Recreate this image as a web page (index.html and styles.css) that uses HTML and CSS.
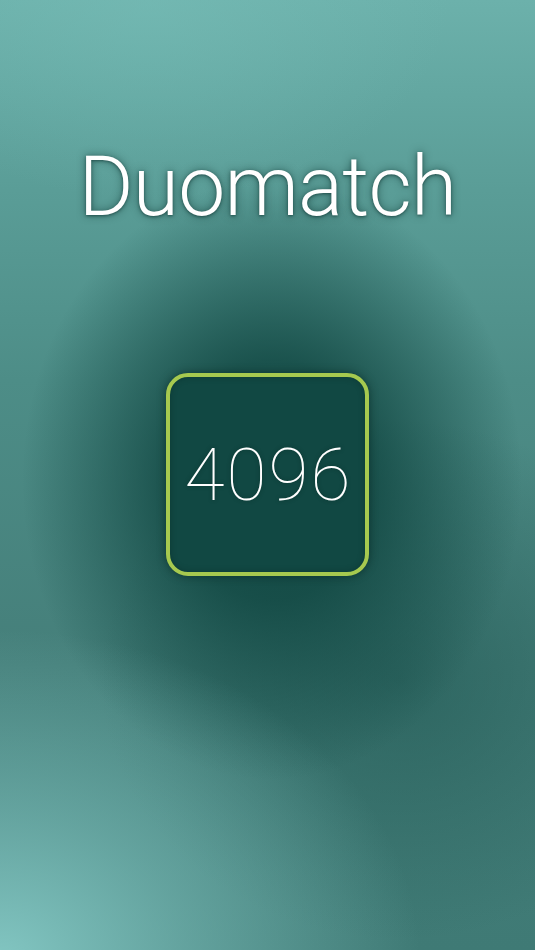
FILE: index.html
```html
<!DOCTYPE html>
<html>
<head>
<meta charset="utf-8">
<link rel="stylesheet" href="styles.css">
</head>
<body>
<main class="screen">
  <h1 class="title">Duomatch</h1>
  <div class="tile"><span class="tile-num">4096</span></div>
</main>
</body>
</html>
```
FILE: styles.css
```css
html, body {
  margin: 0;
  padding: 0;
}
body {
  width: 535px;
  height: 950px;
  overflow: hidden;
}
.screen {
  width: 535px;
  height: 950px;
  display: flex;
  flex-direction: column;
  align-items: center;
  font-family: Roboto, "Liberation Sans", sans-serif;
  background:
    radial-gradient(ellipse 250px 300px at 272px 480px, rgba(14,68,63,1) 0%, rgba(14,68,63,0.8) 40%, rgba(14,68,63,0) 100%),
    radial-gradient(ellipse 300px 260px at 400px 680px, rgba(30,85,80,0.6) 0%, rgba(30,85,80,0) 100%),
    linear-gradient(180deg, #6cb1ab 0%, #5a9d97 20%, #4d8d87 40%, #457f7a 70%, #3f7a75 100%);
  position: relative;
}
.screen::before {
  content: "";
  position: absolute;
  inset: 0;
  background:
    radial-gradient(ellipse 420px 330px at 0px 960px, rgba(134,202,198,0.95) 0%, rgba(134,202,198,0.5) 45%, rgba(134,202,198,0) 100%),
    radial-gradient(ellipse 300px 200px at 150px 0px, rgba(120,190,184,0.5) 0%, rgba(120,190,184,0) 100%);
  pointer-events: none;
}
.title {
  position: relative;
  margin: 141px 0 0 0;
  font-weight: 300;
  font-size: 84px;
  line-height: 92px;
  color: #ffffff;
  letter-spacing: -0.8px;
  text-shadow: 0 0 8px rgba(0,40,36,0.55), 0 1px 3px rgba(0,30,28,0.5);
}
.tile {
  position: relative;
  margin-top: 140px;
  width: 195px;
  height: 195px;
  border: 4px solid #a6c94f;
  border-radius: 22px;
  background: #114843;
  display: flex;
  align-items: center;
  justify-content: center;
  box-shadow: 0 0 8px rgba(0,30,26,0.55), inset 0 0 6px rgba(0,30,26,0.35);
}
.tile-num {
  font-weight: 100;
  font-size: 73px;
  color: #ffffff;
  letter-spacing: 2px;
  margin-left: 2px;
  text-shadow: 0 0 4px rgba(0,30,26,0.4);
}
```
